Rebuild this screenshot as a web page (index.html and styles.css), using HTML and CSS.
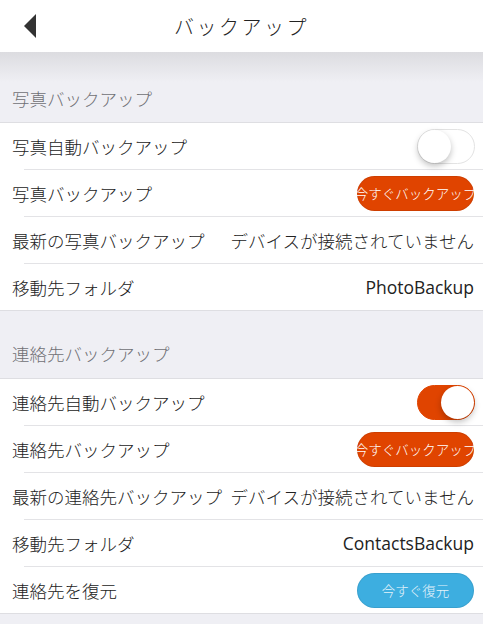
FILE: index.html
```html
<!DOCTYPE html>
<html lang="ja">
<head>
<meta charset="utf-8">
<title>バックアップ</title>
<link rel="stylesheet" href="styles.css">
</head>
<body>
<header class="nav">
  <button class="back" aria-label="戻る">
    <svg width="12" height="24" viewBox="0 0 12 24"><path d="M12 0 L12 24 L0 12 Z" fill="#333"/></svg>
  </button>
  <h1 class="nav-title">バックアップ</h1>
  <span class="nav-spacer"></span>
</header>
<main class="page">
  <section class="group group-first">
    <h2 class="group-title">写真バックアップ</h2>
    <ul class="list">
      <li class="row"><span class="label">写真自動バックアップ</span><span class="toggle"><span class="knob"></span></span></li>
      <li class="row"><span class="label">写真バックアップ</span><button class="btn btn-orange">今すぐバックアップ</button></li>
      <li class="row"><span class="label">最新の写真バックアップ</span><span class="value">デバイスが接続されていません</span></li>
      <li class="row"><span class="label">移動先フォルダ</span><span class="value value-latin">PhotoBackup</span></li>
    </ul>
  </section>
  <section class="group">
    <h2 class="group-title">連絡先バックアップ</h2>
    <ul class="list">
      <li class="row"><span class="label">連絡先自動バックアップ</span><span class="toggle on"><span class="knob"></span></span></li>
      <li class="row"><span class="label">連絡先バックアップ</span><button class="btn btn-orange">今すぐバックアップ</button></li>
      <li class="row"><span class="label">最新の連絡先バックアップ</span><span class="value">デバイスが接続されていません</span></li>
      <li class="row"><span class="label">移動先フォルダ</span><span class="value value-latin">ContactsBackup</span></li>
      <li class="row"><span class="label">連絡先を復元</span><button class="btn btn-blue">今すぐ復元</button></li>
    </ul>
  </section>
</main>
</body>
</html>
```
FILE: styles.css
```css
* { box-sizing: border-box; }
html, body { margin: 0; padding: 0; }
body {
  width: 483px;
  height: 624px;
  overflow: hidden;
  background: #efeff4;
  font-family: "Open Sans", "Noto Sans CJK JP", sans-serif;
  color: #222;
}
.nav {
  height: 52px;
  background: #fff;
  display: grid;
  grid-template-columns: 60px 1fr 60px;
  align-items: center;
  position: relative;
  z-index: 1;
}
.back {
  border: 0;
  background: none;
  padding: 0 0 0 24px;
  display: flex;
  align-items: center;
  height: 52px;
}
.nav-title {
  margin: 0;
  text-align: center;
  font-size: 20px;
  font-weight: 300;
  letter-spacing: 2.5px;
  color: #222;
  font-family: "Noto Sans CJK JP", sans-serif;
}
.page {
  background: linear-gradient(#dcdce0, #efeff4 30px);
  background-repeat: no-repeat;
}
.group-title {
  margin: 0;
  padding: 29px 12px 10px;
  font-size: 17.5px;
  font-weight: 300;
  line-height: 27px;
  color: #6f6f74;
  font-family: "Noto Sans CJK JP", sans-serif;
}
.group-first .group-title { padding-top: 33px; }
.group + .group .list { margin-top: 1px; }
.list {
  list-style: none;
  margin: 0;
  padding: 0;
  background: #fff;
  border-top: 1px solid #dedee2;
  border-bottom: 1px solid #dedee2;
}
.row {
  height: 47px;
  display: flex;
  align-items: center;
  justify-content: space-between;
  padding: 0 9px 1px 12px;
  background: linear-gradient(#e3e3e6, #e3e3e6) no-repeat 24px 100% / calc(100% - 24px) 1px;
  font-size: 17.5px;
  font-weight: 300;
}
.row:last-child { background: none; height: 46px; padding-bottom: 0; }
.label { white-space: nowrap; }
.value { white-space: nowrap; }
.value-latin { font-weight: 400; font-size: 17.5px; }
.toggle {
  width: 58px;
  height: 35px;
  border-radius: 18px;
  border: 1.5px solid #e3e3e3;
  background: #fff;
  display: flex;
  align-items: center;
  margin-right: -1px;
}
.knob {
  width: 33px;
  height: 33px;
  border-radius: 50%;
  background: #fff;
  box-shadow: 0 3px 6px rgba(0,0,0,0.25);
}
.toggle.on {
  background: #e04400;
  border-color: #e04400;
  justify-content: flex-end;
}
.btn {
  width: 117px;
  height: 35px;
  border-radius: 18px;
  border: 1px solid rgba(0,0,0,0.08);
  font-family: "Noto Sans CJK JP", sans-serif;
  font-size: 13.5px;
  font-weight: 300;
  padding: 0;
  white-space: nowrap;
  display: flex;
  align-items: center;
  justify-content: center;
  overflow: visible;
}
.btn-orange { background: #e04400; color: #fff; }
.btn-blue { background: #3daee0; color: #e4f3fb; }
```
